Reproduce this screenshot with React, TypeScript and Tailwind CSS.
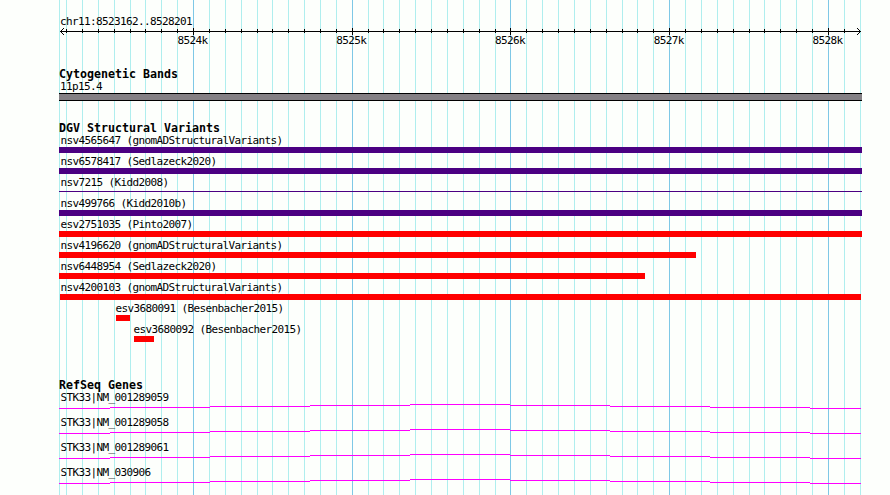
const MAJOR = [193, 352, 510, 669, 828];
const MINOR = [
  66, 82, 98, 114, 130, 145, 161, 177, 209, 225, 241, 257, 272, 288, 304, 320, 336, 368, 383, 399, 415, 431, 447,
  463, 479, 495, 526, 542, 558, 574, 590, 606, 622, 637, 653, 685, 701, 717, 733, 749, 764, 780, 796, 812, 844,
];

const VARIANTS = [
  { label: "nsv4565647 (gnomADStructuralVariants)", start: 59, end: 862, color: "bg-[#4b0082]" },
  { label: "nsv6578417 (Sedlazeck2020)", start: 59, end: 862, color: "bg-[#4b0082]" },
  { label: "nsv7215 (Kidd2008)", start: 59, end: 862, color: "bg-[#4b0082]", thin: true },
  { label: "nsv499766 (Kidd2010b)", start: 59, end: 862, color: "bg-[#4b0082]" },
  { label: "esv2751035 (Pinto2007)", start: 59, end: 862, color: "bg-[#ff0000]" },
  { label: "nsv4196620 (gnomADStructuralVariants)", start: 59, end: 696, color: "bg-[#ff0000]" },
  { label: "nsv6448954 (Sedlazeck2020)", start: 59, end: 645, color: "bg-[#ff0000]" },
  { label: "nsv4200103 (gnomADStructuralVariants)", start: 60, end: 861, color: "bg-[#ff0000]" },
  { label: "esv3680091 (Besenbacher2015)", start: 116, end: 130, color: "bg-[#ff0000]" },
  { label: "esv3680092 (Besenbacher2015)", start: 134, end: 154, color: "bg-[#ff0000]" },
];

const GENES = ["STK33|NM_001289059", "STK33|NM_001289058", "STK33|NM_001289061", "STK33|NM_030906"];

function GridLines() {
  return (
    <svg className="absolute inset-0" width="890" height="495" shapeRendering="crispEdges">
      {[59, ...MINOR, 860].map((x) => (
        <rect key={x} x={x} y="0" width="1" height="495" fill="#afeeee" />
      ))}
      {MAJOR.map((x) => (
        <rect key={x} x={x} y="0" width="1" height="495" fill="#7ec8e6" />
      ))}
    </svg>
  );
}

function Ruler() {
  return (
    <svg className="block" width="890" height="7" shapeRendering="crispEdges">
      <rect x="60" y="3" width="801" height="1" />
      {MINOR.map((x) => (
        <rect key={x} x={x} y="1" width="1" height="4" />
      ))}
      {MAJOR.map((x) => (
        <rect key={x} x={x} y="0" width="1" height="7" />
      ))}
      {[1, 2, 3].map((d) => (
        <g key={d}>
          <rect x={60 + d} y={3 - d} width="1" height="1" />
          <rect x={60 + d} y={3 + d} width="1" height="1" />
          <rect x={860 - d} y={3 - d} width="1" height="1" />
          <rect x={860 - d} y={3 + d} width="1" height="1" />
        </g>
      ))}
    </svg>
  );
}

function Heading({ children }: { children: string }) {
  return (
    <h2 className="h-3 pl-[59px] text-[11.63px] leading-3 font-bold whitespace-pre">{children}</h2>
  );
}

function Label({ children }: { children: string }) {
  return <div className="h-[13px] text-[11px] leading-[13px] tracking-[-0.622px] whitespace-pre">{children}</div>;
}

function Intron() {
  const steps = [
    [59, 110, 4],
    [110, 210, 3],
    [210, 310, 2],
    [310, 410, 1],
    [410, 510, 0],
    [510, 610, 1],
    [610, 710, 2],
    [710, 810, 3],
    [810, 861, 4],
  ];
  return (
    <svg className="block" width="890" height="5" shapeRendering="crispEdges">
      {steps.map(([a, b, y]) => (
        <rect key={a} x={a} y={y} width={b - a} height="1" fill="#ff00ff" />
      ))}
    </svg>
  );
}

export default function App() {
  return (
    <main className="relative h-[495px] w-[890px] overflow-hidden bg-[#fdfffc] font-['DejaVu_Sans_Mono',monospace] text-black">
      <GridLines />
      <div className="relative flex flex-col">
        <header className="h-[68px] pt-[15px]">
          <div className="pl-[60px]">
            <Label>chr11:8523162..8528201</Label>
          </div>
          <Ruler />
          <div className="-mt-px flex gap-[128.75px] pl-[177.5px]">
            {["8524k", "8525k", "8526k", "8527k", "8528k"].map((t) => (
              <div key={t} className="w-[30px]">
                <Label>{t}</Label>
              </div>
            ))}
          </div>
        </header>

        <section className="h-[54px]">
          <Heading>Cytogenetic Bands</Heading>
          <div className="pl-[60px]">
            <Label>11p15.4</Label>
          </div>
          <div className="ml-[59px] h-2 w-[803px] border-y border-black bg-[#848084]" />
        </section>

        <section className="h-[257px]">
          <Heading>DGV Structural Variants</Heading>
          {VARIANTS.map((v) => (
            <div key={v.label} className="h-[21px]">
              <div style={{ paddingLeft: Math.max(60.4, v.start - 0.4) }}>
                <Label>{v.label}</Label>
              </div>
              <div
                className={`flex h-[6px] items-start ${v.thin ? "pt-[2px]" : ""}`}
                style={{ marginLeft: v.start, width: v.end - v.start }}
              >
                <div className={`w-full ${v.thin ? "h-px" : "h-full"} ${v.color}`} />
              </div>
            </div>
          ))}
        </section>

        <section>
          <Heading>RefSeq Genes</Heading>
          {GENES.map((g) => (
            <div key={g} className="h-[25px]">
              <div className="pl-[60.4px]">
                <Label>{g}</Label>
              </div>
              <Intron />
            </div>
          ))}
        </section>
      </div>
    </main>
  );
}
